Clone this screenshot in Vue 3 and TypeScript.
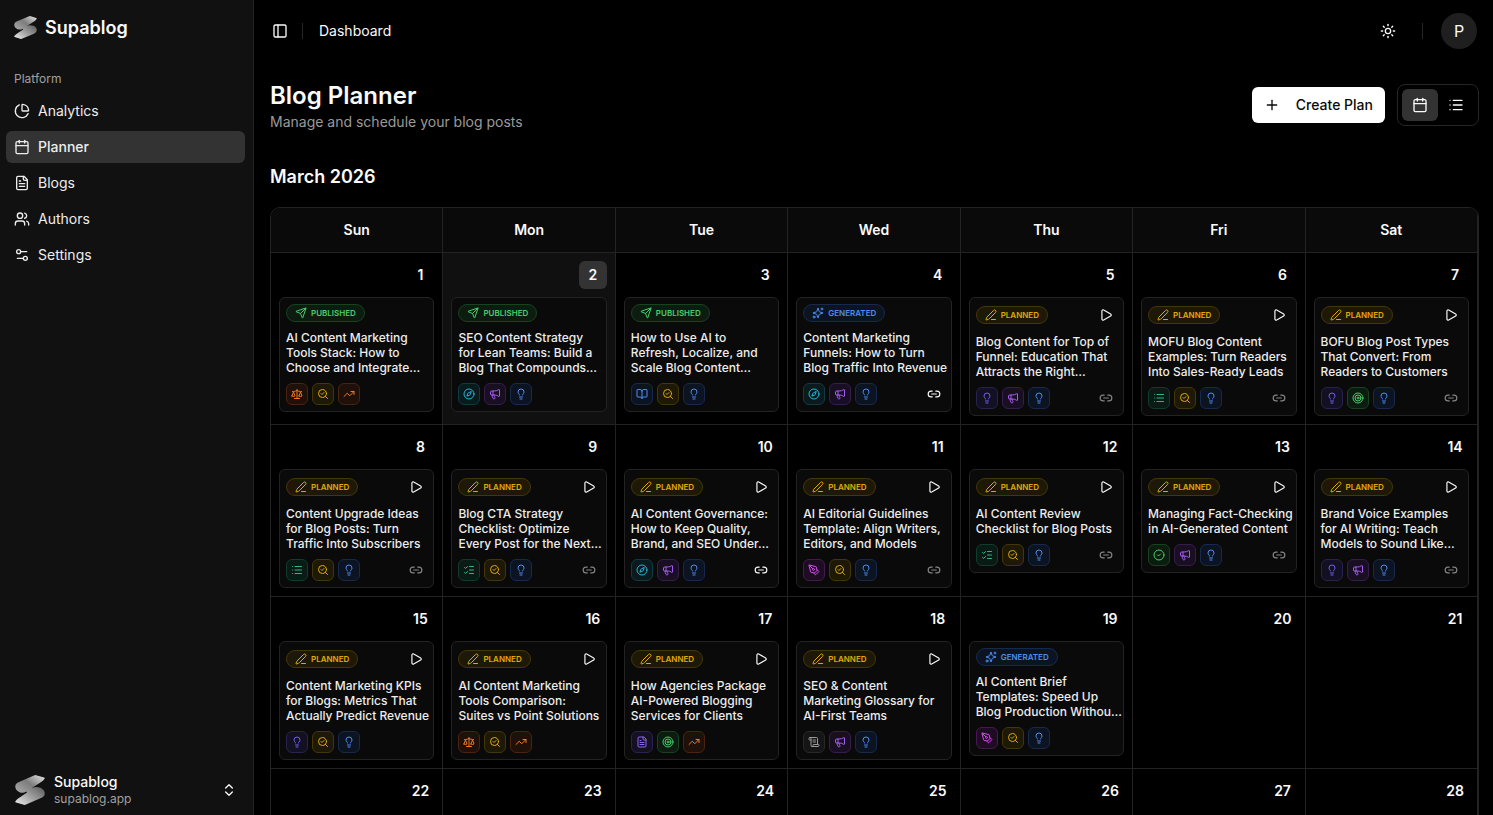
<script setup lang="ts">
type Shape = { d?: string[]; c?: number[][]; r?: number[][] }

const icons: Record<string, Shape> = {
  pie: { d: ['M21 12c.552 0 1.005-.449.95-.998a10 10 0 0 0-8.953-8.951c-.55-.055-.998.398-.998.95v8a1 1 0 0 0 1 1z', 'M21.21 15.89A10 10 0 1 1 8 2.83'] },
  calendar: { d: ['M8 2v4', 'M16 2v4', 'M3 10h18'], r: [[3, 4, 18, 18, 2]] },
  file: { d: ['M15 2H6a2 2 0 0 0-2 2v16a2 2 0 0 0 2 2h12a2 2 0 0 0 2-2V7Z', 'M14 2v4a2 2 0 0 0 2 2h4', 'M10 9H8', 'M16 13H8', 'M16 17H8'] },
  users: { d: ['M16 21v-2a4 4 0 0 0-4-4H6a4 4 0 0 0-4 4v2', 'M22 21v-2a4 4 0 0 0-3-3.87', 'M16 3.13a4 4 0 0 1 0 7.75'], c: [[9, 7, 4]] },
  settings: { d: ['M14 17H5', 'M19 7h-9'], c: [[17, 17, 3], [7, 7, 3]] },
  panel: { d: ['M9 3v18'], r: [[3, 3, 18, 18, 2]] },
  sun: { d: ['M12 2v2', 'M12 20v2', 'm4.93 4.93 1.41 1.41', 'm17.66 17.66 1.41 1.41', 'M2 12h2', 'M20 12h2', 'm6.34 17.66-1.41 1.41', 'm19.07 4.93-1.41 1.41'], c: [[12, 12, 4]] },
  plus: { d: ['M5 12h14', 'M12 5v14'] },
  list: { d: ['M3 5h.01', 'M3 12h.01', 'M3 19h.01', 'M8 5h13', 'M8 12h13', 'M8 19h13'] },
  updown: { d: ['m7 15 5 5 5-5', 'm7 9 5-5 5 5'] },
  send: { d: ['M14.536 21.686a.5.5 0 0 0 .937-.024l6.5-19a.496.496 0 0 0-.635-.635l-19 6.5a.5.5 0 0 0-.024.937l7.93 3.18a2 2 0 0 1 1.112 1.11z', 'm21.854 2.147-10.94 10.939'] },
  sparkles: { d: ['M9.937 15.5A2 2 0 0 0 8.5 14.063l-6.135-1.582a.5.5 0 0 1 0-.962L8.5 9.936A2 2 0 0 0 9.937 8.5l1.582-6.135a.5.5 0 0 1 .963 0L14.063 8.5A2 2 0 0 0 15.5 9.937l6.135 1.581a.5.5 0 0 1 0 .964L15.5 14.063a2 2 0 0 0-1.437 1.437l-1.582 6.135a.5.5 0 0 1-.963 0z', 'M20 2v4', 'M22 4h-4'], c: [[4, 20, 2]] },
  pen: { d: ['M13 21h8', 'M21.174 6.812a1 1 0 0 0-3.986-3.987L3.842 16.174a2 2 0 0 0-.5.83l-1.321 4.352a.5.5 0 0 0 .623.622l4.353-1.32a2 2 0 0 0 .83-.497z'] },
  play: { d: ['M5 5a2 2 0 0 1 3.008-1.728l11.997 6.998a2 2 0 0 1 .003 3.458l-12 7A2 2 0 0 1 5 19z'] },
  link: { d: ['M9 17H7A5 5 0 0 1 7 7h2', 'M15 7h2a5 5 0 1 1 0 10h-2', 'M8 12h8'] },
  scale: { d: ['m16 16 3-8 3 8c-.87.65-1.92 1-3 1s-2.13-.35-3-1Z', 'm2 16 3-8 3 8c-.87.65-1.92 1-3 1s-2.13-.35-3-1Z', 'M7 21h10', 'M12 3v18', 'M3 7h2c2 0 5-1 7-2 2 1 5 2 7 2h2'] },
  search: { d: ['m8 11 2 2 4-4', 'm21 21-4.3-4.3'], c: [[11, 11, 8]] },
  trend: { d: ['M16 7h6v6', 'm22 7-8.5 8.5-5-5L2 17'] },
  compass: { d: ['m16.24 7.76-1.804 5.411a2 2 0 0 1-1.265 1.265L7.76 16.24l1.804-5.411a2 2 0 0 1 1.265-1.265z'], c: [[12, 12, 10]] },
  megaphone: { d: ['M11 6a13 13 0 0 0 8.4-2.8A1 1 0 0 1 21 4v12a1 1 0 0 1-1.6.8A13 13 0 0 0 11 14H5a2 2 0 0 1-2-2V8a2 2 0 0 1 2-2z', 'M6 14a12 12 0 0 0 2.4 7.2 2 2 0 0 0 3.2-2.4A8 8 0 0 1 10 14', 'M8 6v8'] },
  bulb: { d: ['M15 14c.2-1 .7-1.7 1.5-2.5 1-.9 1.5-2.2 1.5-3.5A6 6 0 0 0 6 8c0 1 .2 2.2 1.5 3.5.7.7 1.3 1.5 1.5 2.5', 'M9 18h6', 'M10 22h4'] },
  book: { d: ['M12 7v14', 'M3 18a1 1 0 0 1-1-1V4a1 1 0 0 1 1-1h5a4 4 0 0 1 4 4 4 4 0 0 1 4-4h5a1 1 0 0 1 1 1v13a1 1 0 0 1-1 1h-6a3 3 0 0 0-3 3 3 3 0 0 0-3-3z'] },
  target: { c: [[12, 12, 10], [12, 12, 6], [12, 12, 2]] },
  checks: { d: ['M13 5h8', 'M13 12h8', 'M13 19h8', 'm3 17 2 2 4-4', 'm3 7 2 2 4-4'] },
  check: { d: ['m9 12 2 2 4-4'], c: [[12, 12, 10]] },
  pentool: { d: ['M15.707 21.293a1 1 0 0 1-1.414 0l-1.586-1.586a1 1 0 0 1 0-1.414l5.586-5.586a1 1 0 0 1 1.414 0l1.586 1.586a1 1 0 0 1 0 1.414z', 'm18 13-1.375-6.874a1 1 0 0 0-.746-.776L3.235 2.028a1 1 0 0 0-1.207 1.207L5.35 15.879a1 1 0 0 0 .776.746L13 18', 'm2.3 2.3 7.286 7.286'], c: [[11, 11, 2]] },
  scroll: { d: ['M15 12h-5', 'M15 8h-5', 'M19 17V5a2 2 0 0 0-2-2H4', 'M8 21h12a2 2 0 0 0 2-2v-1a1 1 0 0 0-1-1H11a1 1 0 0 0-1 1v1a2 2 0 1 1-4 0V5a2 2 0 1 0-4 0v2a1 1 0 0 0 1 1h3'] },
}

const Icon = (props: { name: string }) => {
  const s = icons[props.name]
  return h('svg', { class: 'icon', viewBox: '0 0 24 24', 'aria-hidden': 'true' }, [
    ...(s.r ?? []).map(([x, y, width, height, rx]) => h('rect', { x, y, width, height, rx })),
    ...(s.d ?? []).map((d) => h('path', { d })),
    ...(s.c ?? []).map(([cx, cy, r]) => h('circle', { cx, cy, r })),
  ])
}
Icon.props = ['name']

const Logo = () =>
  h('svg', { class: 'logo', viewBox: '0 0 30 30', 'aria-hidden': 'true' }, [
    h('path', { fill: 'url(#lower)', d: 'M11 29.5Q9.500 30.200 8 29.600L1 27.400Q-.3 26.800.8 25.800Q2 24 5 22.200L12 17.600L10 14L18 12.400Q22 11.500 25.500 12.800Q30 15 29.700 19Q29.500 21.500 26 23Z' }),
    h('path', { fill: 'url(#upper)', d: 'M19 .5Q20.500-.2 22 .4L29 2.600Q30.300 3.200 29.200 4.200Q28 6 25 7.800L11 16.800Q8 18.500 4.500 17.200Q0 15 .3 11Q.5 8.500 4 7Z' }),
  ])

const nav = [
  { label: 'Analytics', icon: 'pie' },
  { label: 'Planner', icon: 'calendar' },
  { label: 'Blogs', icon: 'file' },
  { label: 'Authors', icon: 'users' },
  { label: 'Settings', icon: 'settings' },
]

const statuses = {
  published: { label: 'PUBLISHED', icon: 'send', color: 'green' },
  generated: { label: 'GENERATED', icon: 'sparkles', color: 'blue' },
  planned: { label: 'PLANNED', icon: 'pen', color: 'yellow' },
}

const tags: Record<string, [string, string]> = {
  compare: ['scale', 'orange'],
  seo: ['search', 'yellow'],
  trend: ['trend', 'orange'],
  guide: ['compass', 'cyan'],
  promo: ['megaphone', 'purple'],
  tip: ['bulb', 'blue'],
  idea: ['bulb', 'indigo'],
  book: ['book', 'blue'],
  list: ['list', 'emerald'],
  goal: ['target', 'green'],
  steps: ['checks', 'emerald'],
  fact: ['check', 'green'],
  design: ['pentool', 'fuchsia'],
  article: ['file', 'violet'],
  glossary: ['scroll', 'gray'],
}

interface Post {
  status: keyof typeof statuses
  title: string
  tags: string[]
  link?: 'dim' | 'bright'
}

const posts: Record<number, Post> = {
  1: { status: 'published', title: 'AI Content Marketing\nTools Stack: How to\nChoose and Integrate…', tags: ['compare', 'seo', 'trend'] },
  2: { status: 'published', title: 'SEO Content Strategy\nfor Lean Teams: Build a\nBlog That Compounds…', tags: ['guide', 'promo', 'tip'] },
  3: { status: 'published', title: 'How to Use AI to\nRefresh, Localize, and\nScale Blog Content…', tags: ['book', 'seo', 'tip'] },
  4: { status: 'generated', title: 'Content Marketing\nFunnels: How to Turn\nBlog Traffic Into Revenue', tags: ['guide', 'promo', 'tip'], link: 'bright' },
  5: { status: 'planned', title: 'Blog Content for Top of\nFunnel: Education That\nAttracts the Right…', tags: ['idea', 'promo', 'tip'], link: 'dim' },
  6: { status: 'planned', title: 'MOFU Blog Content\nExamples: Turn Readers\nInto Sales-Ready Leads', tags: ['list', 'seo', 'tip'], link: 'dim' },
  7: { status: 'planned', title: 'BOFU Blog Post Types\nThat Convert: From\nReaders to Customers', tags: ['idea', 'goal', 'tip'], link: 'dim' },
  8: { status: 'planned', title: 'Content Upgrade Ideas\nfor Blog Posts: Turn\nTraffic Into Subscribers', tags: ['list', 'seo', 'tip'], link: 'dim' },
  9: { status: 'planned', title: 'Blog CTA Strategy\nChecklist: Optimize\nEvery Post for the Next…', tags: ['steps', 'seo', 'tip'], link: 'dim' },
  10: { status: 'planned', title: 'AI Content Governance:\nHow to Keep Quality,\nBrand, and SEO Under…', tags: ['guide', 'promo', 'tip'], link: 'bright' },
  11: { status: 'planned', title: 'AI Editorial Guidelines\nTemplate: Align Writers,\nEditors, and Models', tags: ['design', 'seo', 'tip'], link: 'dim' },
  12: { status: 'planned', title: 'AI Content Review\nChecklist for Blog Posts', tags: ['steps', 'seo', 'tip'], link: 'dim' },
  13: { status: 'planned', title: 'Managing Fact-Checking\nin AI-Generated Content', tags: ['fact', 'promo', 'tip'], link: 'dim' },
  14: { status: 'planned', title: 'Brand Voice Examples\nfor AI Writing: Teach\nModels to Sound Like…', tags: ['idea', 'promo', 'tip'], link: 'dim' },
  15: { status: 'planned', title: 'Content Marketing KPIs\nfor Blogs: Metrics That\nActually Predict Revenue', tags: ['idea', 'seo', 'tip'] },
  16: { status: 'planned', title: 'AI Content Marketing\nTools Comparison:\nSuites vs Point Solutions', tags: ['compare', 'seo', 'trend'] },
  17: { status: 'planned', title: 'How Agencies Package\nAI-Powered Blogging\nServices for Clients', tags: ['article', 'goal', 'trend'] },
  18: { status: 'planned', title: 'SEO & Content\nMarketing Glossary for\nAI-First Teams', tags: ['glossary', 'promo', 'tip'] },
  19: { status: 'generated', title: 'AI Content Brief\nTemplates: Speed Up\nBlog Production Withou…', tags: ['design', 'seo', 'tip'] },
}

const weekdays = ['Sun', 'Mon', 'Tue', 'Wed', 'Thu', 'Fri', 'Sat']
const weeks = [0, 1, 2, 3].map((w) => weekdays.map((_, d) => w * 7 + d + 1))
const today = 2
const view = ref<'calendar' | 'list'>('calendar')
</script>

<script lang="ts">
import { h, ref } from 'vue'
</script>

<template>
  <div class="app">
    <svg class="defs" aria-hidden="true">
      <defs>
        <linearGradient id="upper" x1="0" y1="0.8" x2="1" y2="0">
          <stop offset="0" stop-color="#a3a3a3" />
          <stop offset="0.45" stop-color="#7d7d7d" />
          <stop offset="1" stop-color="#e8e8e8" />
        </linearGradient>
        <linearGradient id="lower" x1="0" y1="1" x2="1" y2="0.2">
          <stop offset="0" stop-color="#f0f0f0" />
          <stop offset="0.5" stop-color="#a6a6a6" />
          <stop offset="1" stop-color="#666" />
        </linearGradient>
      </defs>
    </svg>

    <aside class="sidebar">
      <a class="brand" href="#"><Logo /><span>Supablog</span></a>
      <nav class="nav">
        <p class="nav-title">Platform</p>
        <a v-for="n in nav" :key="n.label" href="#" class="nav-item" :class="{ active: n.label === 'Planner' }">
          <Icon :name="n.icon" /><span>{{ n.label }}</span>
        </a>
      </nav>
      <button class="workspace" type="button">
        <Logo />
        <span class="workspace-text">
          <span class="workspace-name">Supablog</span>
          <span class="workspace-host">supablog.app</span>
        </span>
        <Icon name="updown" />
      </button>
    </aside>

    <main class="main">
      <header class="topbar">
        <button class="ghost" type="button" aria-label="Toggle sidebar"><Icon name="panel" /></button>
        <span class="divider"></span>
        <span class="crumb">Dashboard</span>
        <button class="ghost theme" type="button" aria-label="Toggle theme"><Icon name="sun" /></button>
        <span class="divider"></span>
        <button class="avatar" type="button">P</button>
      </header>

      <section class="content">
        <div class="heading">
          <div class="heading-text">
            <h1>Blog Planner</h1>
            <p>Manage and schedule your blog posts</p>
          </div>
          <button class="create" type="button"><Icon name="plus" /><span>Create Plan</span></button>
          <div class="switch">
            <button type="button" aria-label="Calendar view" :class="{ on: view === 'calendar' }" @click="view = 'calendar'"><Icon name="calendar" /></button>
            <button type="button" aria-label="List view" :class="{ on: view === 'list' }" @click="view = 'list'"><Icon name="list" /></button>
          </div>
        </div>

        <h2>March 2026</h2>

        <div class="calendar">
          <table>
            <thead>
              <tr><th v-for="d in weekdays" :key="d" scope="col">{{ d }}</th></tr>
            </thead>
            <tbody>
              <tr v-for="(week, w) in weeks" :key="w">
                <td v-for="day in week" :key="day" :class="{ today: day === today }">
                  <div class="day"><span>{{ day }}</span></div>
                  <article v-if="posts[day]" class="card">
                    <div class="card-top">
                      <span class="badge" :class="statuses[posts[day].status].color">
                        <Icon :name="statuses[posts[day].status].icon" />
                        <span>{{ statuses[posts[day].status].label }}</span>
                      </span>
                      <button v-if="posts[day].status === 'planned'" class="play" type="button" aria-label="Generate post"><Icon name="play" /></button>
                    </div>
                    <h3>{{ posts[day].title }}</h3>
                    <div class="card-bottom">
                      <span v-for="t in posts[day].tags" :key="t" class="tag" :class="tags[t][1]"><Icon :name="tags[t][0]" /></span>
                      <button v-if="posts[day].link" class="link" :class="posts[day].link" type="button" aria-label="Links"><Icon name="link" /></button>
                    </div>
                  </article>
                </td>
              </tr>
            </tbody>
          </table>
        </div>
      </section>
    </main>
  </div>
</template>

<style>
body {
  background: #000;
}
</style>

<style scoped>
.app {
  display: flex;
  height: 100vh;
  overflow: hidden;
  background: #000;
  color: #fafafa;
  font-family: Inter, 'Liberation Sans', sans-serif;
  font-size: 14px;
  line-height: 20px;
}
.app * {
  box-sizing: border-box;
}
.defs {
  position: absolute;
  width: 0;
  height: 0;
}
button {
  display: flex;
  align-items: center;
  justify-content: center;
  padding: 0;
  border: 0;
  background: none;
  color: inherit;
  font: inherit;
  cursor: pointer;
}
a {
  color: inherit;
  text-decoration: none;
}
h1,
h2,
h3,
p {
  margin: 0;
}
.icon {
  flex: none;
  width: 16px;
  height: 16px;
  fill: none;
  stroke: currentColor;
  stroke-width: 2;
  stroke-linecap: round;
  stroke-linejoin: round;
}
.sidebar {
  display: flex;
  flex-direction: column;
  flex: none;
  width: 254px;
  padding: 8px 8px 1px 6px;
  border-right: 1px solid #232323;
  background: #111;
}
.brand {
  display: flex;
  align-items: center;
  gap: 8px;
  height: 39px;
  padding: 0 8px;
  font-size: 18px;
  font-weight: 600;
}
.brand .logo {
  width: 23px;
  height: 23px;
}
.nav {
  display: flex;
  flex-direction: column;
  gap: 4px;
  margin-top: 16px;
}
.nav-title {
  height: 28px;
  padding: 0 8px;
  color: #a0a0a0;
  font-size: 12px;
  line-height: 32px;
}
.nav-item {
  display: flex;
  align-items: center;
  gap: 8px;
  height: 32px;
  padding: 0 8px;
  border-radius: 6px;
  color: #ededed;
}
.nav-item.active {
  background: #333;
  font-weight: 500;
}
.workspace {
  gap: 9px;
  height: 48px;
  margin-top: auto;
  padding: 0 8px 0 9px;
  text-align: left;
}
.workspace .logo {
  width: 30px;
  height: 30px;
}
.workspace-text {
  display: flex;
  flex: 1;
  flex-direction: column;
}
.workspace-name {
  font-weight: 500;
  line-height: 17px;
}
.workspace-host {
  color: #a0a0a0;
  font-size: 12px;
  line-height: 17px;
}
.main {
  flex: 1;
  min-width: 0;
}
.topbar {
  display: flex;
  align-items: center;
  height: 62px;
  padding: 0 16px 0 12px;
}
.ghost {
  width: 28px;
  height: 28px;
}
.divider {
  width: 1px;
  height: 16px;
  margin: 0 16px 0 8px;
  background: #262626;
}
.theme {
  margin-left: auto;
  margin-right: 12px;
}
.theme + .divider {
  margin-right: 18px;
}
.avatar {
  width: 36px;
  height: 36px;
  border-radius: 50%;
  background: #1f1f1f;
  font-size: 16px;
}
.content {
  padding: 16px 14px 16px 16px;
}
.heading {
  display: flex;
  align-items: center;
  gap: 12px;
  height: 54px;
}
.heading-text {
  flex: 1;
}
h1 {
  font-size: 24px;
  font-weight: 600;
  line-height: 33px;
}
.heading-text p {
  color: #9a9a9a;
}
.create {
  gap: 16px;
  height: 36px;
  padding: 0 12px;
  border-radius: 6px;
  background: #fff;
  color: #0a0a0a;
  font-weight: 500;
}
.switch {
  display: flex;
  padding: 4px;
  border: 1px solid #262626;
  border-radius: 8px;
}
.switch button {
  width: 36px;
  height: 32px;
  border-radius: 6px;
}
.switch .on {
  background: #333;
}
h2 {
  margin: 31px 0 16px;
  font-size: 18px;
  font-weight: 600;
  line-height: 28px;
}
.calendar {
  overflow: hidden;
  border: 1px solid #232323;
  border-radius: 10px;
}
table {
  width: 100%;
  table-layout: fixed;
  border-spacing: 0;
}
th {
  height: 45px;
  padding: 0;
  border-right: 1px solid #232323;
  border-bottom: 1px solid #232323;
  background: #0a0a0a;
  font-weight: 600;
}
td {
  height: 172px;
  padding: 8px;
  border-right: 1px solid #232323;
  border-bottom: 1px solid #232323;
  vertical-align: top;
}
td.today {
  background: #101010;
}
.day {
  display: flex;
  justify-content: flex-end;
  margin-bottom: 8px;
  font-weight: 600;
}
.day span {
  width: 28px;
  border-radius: 6px;
  line-height: 28px;
  text-align: center;
}
.today .day span {
  background: #333;
}
.card {
  padding: 6px;
  border: 1px solid #232323;
  border-radius: 6px;
  background: #0a0a0a;
}
.card-top,
.card-bottom {
  display: flex;
  align-items: center;
}
.badge {
  display: flex;
  align-items: center;
  gap: 4px;
  height: 18px;
  padding: 0 8px;
  border: 1px solid;
  border-radius: 9px;
  font-size: 8px;
  font-weight: 600;
  line-height: 16px;
}
.badge .icon {
  width: 12px;
  height: 12px;
}
.play,
.link {
  width: 22px;
  height: 22px;
  margin-left: auto;
}
.play .icon,
.link .icon {
  width: 14px;
  height: 14px;
}
.link.dim {
  color: #858585;
}
h3 {
  margin: 8px 0;
  color: #ededed;
  font-size: 12px;
  font-weight: 500;
  line-height: 15px;
  white-space: pre;
}
.card-bottom {
  gap: 4px;
}
.tag {
  display: flex;
  align-items: center;
  justify-content: center;
  width: 22px;
  height: 22px;
  border: 1px solid;
  border-radius: 6px;
}
.tag .icon {
  width: 12px;
  height: 12px;
}
.green {
  border-color: #17431f;
  background: #0c1c10;
  color: #48cf6b;
}
.blue {
  border-color: #172a4d;
  background: #0c1422;
  color: #4f8df0;
}
.yellow {
  border-color: #43360a;
  background: #1e1806;
  color: #e0ab08;
}
.orange {
  border-color: #4a240e;
  background: #1f1109;
  color: #f07a26;
}
.cyan {
  border-color: #0f3b45;
  background: #0a1a1d;
  color: #22b8d6;
}
.purple {
  border-color: #371d4e;
  background: #190f22;
  color: #a55cf0;
}
.indigo {
  border-color: #27244f;
  background: #121022;
  color: #6f62e8;
}
.emerald {
  border-color: #113b2d;
  background: #0a1b15;
  color: #2fb58a;
}
.fuchsia {
  border-color: #461a4e;
  background: #1e0d22;
  color: #d050e6;
}
.violet {
  border-color: #2c2156;
  background: #151024;
  color: #8b66f0;
}
.gray {
  border-color: #282828;
  background: #151515;
  color: #9a9a9a;
}
</style>
